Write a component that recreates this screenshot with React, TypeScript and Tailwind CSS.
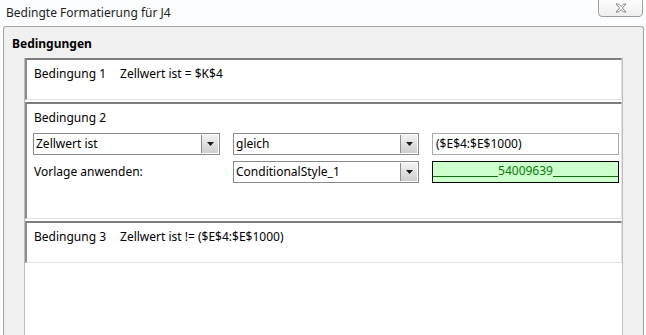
import React from 'react';

const font = "font-['Noto_Sans','Open_Sans',sans-serif]";

const DropButton: React.FC = () => (
  <div className="w-[17px] h-full flex items-center justify-center border-l border-[#8e8e8e] bg-gradient-to-b from-[#f2f2f2] to-[#cfcfcf]">
    <svg width="7" height="4" viewBox="0 0 7 4">
      <path d="M0 0 H7 L3.5 4 Z" fill="#1a1a1a" />
    </svg>
  </div>
);

const Combo: React.FC<{ value: string; width: string }> = ({ value, width }) => (
  <div className={`${width} h-[22px] flex bg-white border border-[#8a8a8a]`}>
    <div className="flex-1 flex items-center pl-[2px] text-[12px] text-black truncate">{value}</div>
    <div className="py-[1px] pr-[1px] h-full">
      <DropButton />
    </div>
  </div>
);

const Entry: React.FC<{ children: React.ReactNode; className?: string }> = ({ children, className = '' }) => (
  <div className={`border-t-2 border-l-2 border-t-[#7d7d7d] border-l-[#8c8c8c] border-r border-b border-r-[#e2e2e2] border-b-[#e2e2e2] bg-white ${className}`}>
    {children}
  </div>
);

export default function App() {
  return (
    <div className={`w-[646px] h-[335px] overflow-hidden bg-[#fbfdfe] relative text-black ${font}`}>
      {/* title bar */}
      <div className="h-[26px] flex items-center pl-[6px] text-[12px] text-[#1e1e1e]">
        Bedingte Formatierung für J4
      </div>
      <div className="absolute right-[3px] top-[-1px] w-[45px] h-[18px] rounded-b-[4px] border border-[#9c9c9c] bg-gradient-to-b from-[#fdfdfd] to-[#eeeeee] flex items-center justify-center">
        <svg width="12" height="10" viewBox="0 0 12 10">
          <path
            d="M1 1 H3.5 L6 3.5 L8.5 1 H11 L7.3 5 L11 9 H8.5 L6 6.5 L3.5 9 H1 L4.7 5 Z"
            fill="#ffffff"
            stroke="#6b6b6b"
            strokeWidth="0.8"
            strokeLinejoin="round"
          />
        </svg>
      </div>

      {/* dialog body */}
      <div className="ml-[3px] mr-[2px] h-[309px] bg-[#f0f0f0] border-l border-t border-r border-[#a3a3a3] rounded-tl-[3px] rounded-tr-[3px]">
        <div className="pl-[8px] pt-[9px] text-[12px] leading-[16px] font-bold">Bedingungen</div>
        <div className="ml-[20px] mt-[6px] w-[599px] h-[300px] bg-white border-l border-r border-[#bdbdbd] flex flex-col">
          <Entry className="h-[42px]">
            <div className="pl-[7px] pt-[6px] text-[12px] leading-[16px] flex">
              <span>Bedingung 1</span>
              <span className="ml-[14px]">Zellwert ist = $K$4</span>
            </div>
          </Entry>
          <Entry className="h-[117px] mt-[2px]">
            <div className="pl-[7px] pt-[6px] text-[12px] leading-[16px]">Bedingung 2</div>
            <div className="pl-[6px] pt-[7px] flex gap-[13px]">
              <Combo value="Zellwert ist" width="w-[187px]" />
              <Combo value="gleich" width="w-[186px]" />
              <div className="w-[187px] h-[22px] border border-[#acacac] bg-white flex items-center pl-[3px] text-[12px]">
                ($E$4:$E$1000)
              </div>
            </div>
            <div className="pl-[6px] pt-[6px] flex gap-[13px]">
              <div className="w-[187px] h-[22px] flex items-center pl-[1px] text-[12px]">Vorlage anwenden:</div>
              <Combo value="ConditionalStyle_1" width="w-[186px]" />
              <div className="w-[187px] h-[22px] border border-black bg-[#ccffcc] flex items-end pb-[4px] text-[12px] text-[#0b7a0b]">
                <div className="flex-1 border-b border-[#0b6e0b] mb-[1px]" />
                <span className="leading-[14px]">54009639</span>
                <div className="flex-1 border-b border-[#0b6e0b] mb-[1px]" />
              </div>
            </div>
          </Entry>
          <Entry className="h-[42px] mt-[2px]">
            <div className="pl-[7px] pt-[6px] text-[12px] leading-[16px] flex">
              <span>Bedingung 3</span>
              <span className="ml-[14px]">Zellwert ist != ($E$4:$E$1000)</span>
            </div>
          </Entry>
        </div>
      </div>
    </div>
  );
}
